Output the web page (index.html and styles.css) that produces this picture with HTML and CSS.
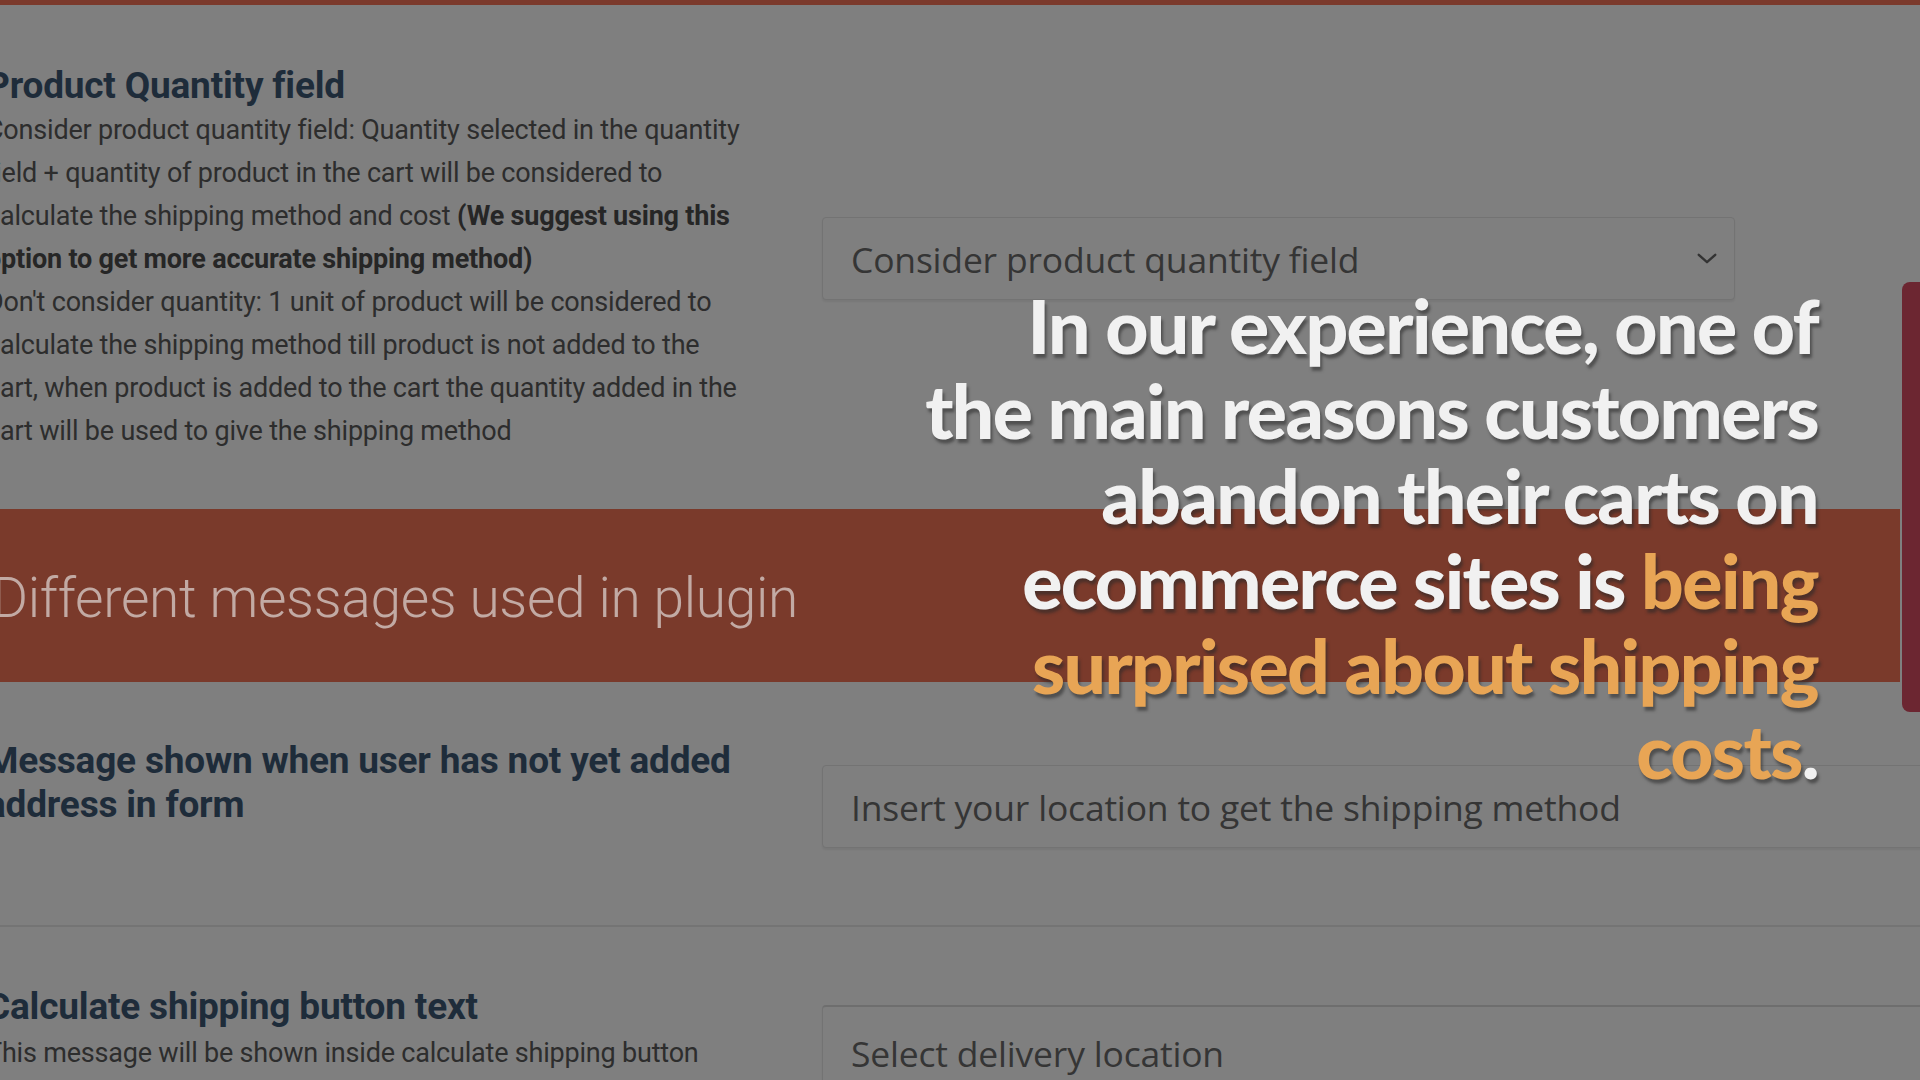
FILE: index.html
```html
<!DOCTYPE html>
<html lang="en">
<head>
<meta charset="utf-8">
<title>Shipping settings</title>
<link rel="stylesheet" href="styles.css">
</head>
<body>
<div class="topbar"></div>

<section class="row row-qty">
  <div class="label-col">
    <h3 class="field-title">Product Quantity field</h3>
    <p class="field-desc">Consider product quantity field: Quantity selected in the quantity<br>field + quantity of product in the cart will be considered to<br>calculate the shipping method and cost <b>(We suggest using this<br>option to get more accurate shipping method)</b><br>Don't consider quantity: 1 unit of product will be considered to<br>calculate the shipping method till product is not added to the<br>cart, when product is added to the cart the quantity added in the<br>cart will be used to give the shipping method</p>
  </div>
  <div class="control-col">
    <div class="select-box">
      <span class="control-text">Consider product quantity field</span>
      <svg class="chevron" viewBox="0 0 24 14" width="22" height="13"><path d="M3 3 L12 11 L21 3" fill="none" stroke="#333" stroke-width="2.6" stroke-linecap="round" stroke-linejoin="round"/></svg>
    </div>
  </div>
</section>

<div class="band">
  <h2 class="band-title">Different messages used in plugin</h2>
</div>

<section class="row row-msg">
  <div class="label-col">
    <h3 class="field-title lh">Message shown when user has not yet added<br>address in form</h3>
  </div>
  <div class="control-col">
    <div class="input-box wide">
      <span class="control-text">Insert your location to get the shipping method</span>
    </div>
  </div>
</section>

<div class="separator"></div>

<section class="row row-btn">
  <div class="label-col">
    <h3 class="field-title">Calculate shipping button text</h3>
    <p class="field-desc small">This message will be shown inside calculate shipping button</p>
  </div>
  <div class="control-col">
    <div class="input-box wide tall">
      <span class="control-text">Select delivery location</span>
    </div>
  </div>
</section>

<div class="side-tab"></div>

<div class="caption">
  <p>In our experience, one of</p>
  <p>the main reasons customers</p>
  <p>abandon their carts on</p>
  <p>ecommerce sites is <span class="hl">being</span></p>
  <p><span class="hl">surprised about shipping</span></p>
  <p><span class="hl">costs</span>.</p>
</div>
</body>
</html>
```

FILE: styles.css
```css
* { box-sizing: border-box; }

html, body {
  margin: 0;
  padding: 0;
}

body {
  width: 1920px;
  height: 1080px;
  overflow: hidden;
  position: relative;
  background: #7f7f7f;
  font-family: Roboto, "Liberation Sans", sans-serif;
}

.topbar {
  height: 5px;
  background: #7b3a2c;
}

.row {
  display: flex;
  align-items: flex-start;
}

.label-col {
  width: 836px;
  margin-left: -14px;
  flex: none;
}

.control-col {
  flex: none;
}

.field-title {
  margin: 0;
  font-size: 37px;
  line-height: 40px;
  font-weight: 700;
  color: #1e2c3a;
  letter-spacing: -0.2px;
  white-space: nowrap;
}

.field-title.lh {
  line-height: 44px;
}

.field-desc {
  margin: 3px 0 0;
  font-size: 27px;
  line-height: 43px;
  color: #2d2d2d;
  letter-spacing: -0.2px;
  white-space: nowrap;
}

.field-desc b {
  font-weight: 700;
  color: #262626;
}

.field-desc.small {
  font-size: 27px;
  margin-top: 5px;
  letter-spacing: -0.2px;
}

.row-qty {
  padding-top: 61px;
}

.row-qty .control-col {
  margin-top: 151px;
}

.select-box,
.input-box {
  display: flex;
  align-items: center;
  justify-content: space-between;
  border: 1px solid #737373;
  border-radius: 4px;
  background: #7f7f7f;
  padding: 0 28px;
  box-shadow: 0 2px 2px rgba(0, 0, 0, 0.06);
}

.select-box {
  width: 913px;
  height: 83px;
}

.input-box.wide {
  width: 1150px;
  height: 83px;
}

.input-box.tall {
  height: 120px;
  align-items: flex-start;
  padding-top: 22px;
  border-top: 2px solid #6e6e6e;
}

.control-text {
  font-family: "Open Sans", "Liberation Sans", sans-serif;
  font-size: 35.5px;
  line-height: 48px;
  color: #353535;
  letter-spacing: -0.2px;
  white-space: nowrap;
}

.chevron {
  margin-right: -12px;
}

.band {
  margin-top: 56px;
  height: 173px;
  width: 1900px;
  background: #7a3a2b;
  display: flex;
  align-items: center;
  padding-top: 4px;
}

.band-title {
  margin: 0 0 0 -8px;
  font-size: 55px;
  font-weight: 300;
  color: #c2aaa4;
  letter-spacing: -0.3px;
  white-space: nowrap;
}

.row-msg {
  padding-top: 57px;
}

.row-msg .control-col {
  margin-top: 26px;
}

.separator {
  margin-top: 77px;
  height: 2px;
  background: #747474;
}

.row-btn {
  padding-top: 60px;
}

.row-btn .control-col {
  margin-top: 18px;
}

.side-tab {
  position: absolute;
  left: 1902px;
  top: 282px;
  width: 30px;
  height: 430px;
  background: #6c2631;
  border-radius: 8px;
}

.caption {
  position: absolute;
  right: 102px;
  top: 283px;
  text-align: right;
  font-family: Lato, "Open Sans", sans-serif;
  font-weight: 900;
  font-size: 75px;
  line-height: 85px;
  letter-spacing: -1.6px;
  color: #f1f1f1;
  text-shadow: 2px 4px 3px rgba(40, 40, 40, 0.55);
}

.caption p {
  margin: 0;
  white-space: nowrap;
}

.caption .hl {
  color: #e8a555;
}
```
